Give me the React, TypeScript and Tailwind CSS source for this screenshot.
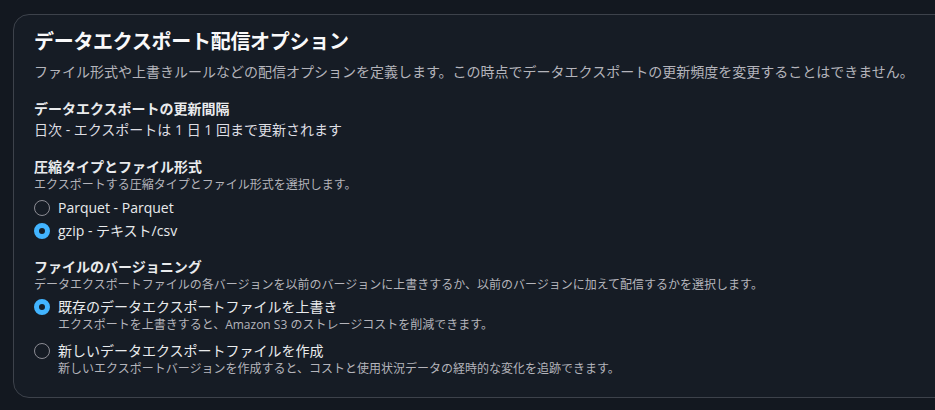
const font = { fontFamily: '"Open Sans", "Noto Sans CJK JP", sans-serif' }

function Radio({ checked }: { checked: boolean }) {
  return checked ? (
    <span className="block w-[16px] h-[16px] rounded-full border-[5px] border-[#42b4ff] bg-[#161d26] shrink-0" />
  ) : (
    <span className="block w-[16px] h-[16px] rounded-full border-[1.5px] border-[#8c8c94] shrink-0" />
  )
}

function Option({ label, desc, checked }: { label: string; desc?: string; checked: boolean }) {
  return (
    <div className="flex gap-[8px]">
      <div className="h-[20px] flex items-center">
        <Radio checked={checked} />
      </div>
      <div>
        <p className="text-[14px] leading-[20px] text-[#e9ebed]">{label}</p>
        {desc && <p className="text-[12px] leading-[16px] text-[#b4b4bb]">{desc}</p>}
      </div>
    </div>
  )
}

export default function App() {
  return (
    <div className="w-[935px] h-[410px] overflow-hidden bg-[#131820] pt-[14px] pl-[13px]" style={font}>
      <div className="w-[960px] h-[384px] rounded-[16px] border border-[#3d424b] bg-[#161c25] pl-5 pt-[15px]">
        {/* Header */}
        <h2 className="text-[20px] leading-[24px] font-bold text-[#f9f9fa] tracking-[-0.3px]">
          データエクスポート配信オプション
        </h2>
        <p className="mt-2 text-[14px] leading-[20px] text-[#b4b4bb]">
          ファイル形式や上書きルールなどの配信オプションを定義します。この時点でデータエクスポートの更新頻度を変更することはできません。
        </p>

        {/* 更新間隔 */}
        <div className="mt-[17px]">
          <h3 className="text-[14px] leading-[20px] font-bold text-[#e9ebed]">データエクスポートの更新間隔</h3>
          <p className="mt-px text-[14px] leading-[20px] text-[#dedee3]">日次 - エクスポートは 1 日 1 回まで更新されます</p>
        </div>

        {/* 圧縮タイプ */}
        <div className="mt-[17px]">
          <h3 className="text-[14px] leading-[20px] font-bold text-[#e9ebed]">圧縮タイプとファイル形式</h3>
          <p className="text-[12px] leading-[16px] text-[#b4b4bb]">エクスポートする圧縮タイプとファイル形式を選択します。</p>
          <div className="mt-[5px] flex flex-col gap-[3px]">
            <Option label="Parquet - Parquet" checked={false} />
            <Option label="gzip - テキスト/csv" checked />
          </div>
        </div>

        {/* バージョニング */}
        <div className="mt-4">
          <h3 className="text-[14px] leading-[20px] font-bold text-[#e9ebed]">ファイルのバージョニング</h3>
          <p className="text-[12px] leading-[16px] text-[#b4b4bb]">
            データエクスポートファイルの各バージョンを以前のバージョンに上書きするか、以前のバージョンに加えて配信するかを選択します。
          </p>
          <div className="mt-1 flex flex-col gap-2">
            <Option
              label="既存のデータエクスポートファイルを上書き"
              desc="エクスポートを上書きすると、Amazon S3 のストレージコストを削減できます。"
              checked
            />
            <Option
              label="新しいデータエクスポートファイルを作成"
              desc="新しいエクスポートバージョンを作成すると、コストと使用状況データの経時的な変化を追跡できます。"
              checked={false}
            />
          </div>
        </div>
      </div>
    </div>
  )
}
